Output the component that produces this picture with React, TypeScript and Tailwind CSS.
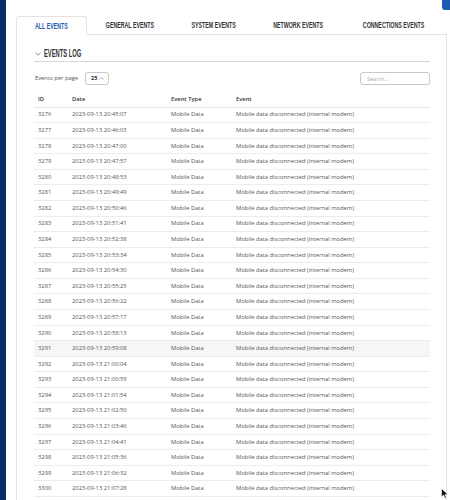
import { useState } from 'react'

const tabs = [
    { label: 'ALL EVENTS', w: 'w-[71px]' },
    { label: 'GENERAL EVENTS', w: 'w-[86px]' },
    { label: 'SYSTEM EVENTS', w: 'w-[81px]' },
    { label: 'NETWORK EVENTS', w: 'w-[88px]' },
    { label: 'CONNECTIONS EVENTS', w: 'w-[104px]' },
]

const times = [
    '20:45:07', '20:46:03', '20:47:00', '20:47:57', '20:48:53', '20:49:49', '20:50:46',
    '20:51:41', '20:52:38', '20:53:34', '20:54:30', '20:55:25', '20:56:22', '20:57:17',
    '20:58:13', '20:59:08', '21:00:04', '21:00:59', '21:01:54', '21:02:50', '21:03:46',
    '21:04:41', '21:05:36', '21:06:32', '21:07:28',
]

const rows = times.map((t, i) => ({
    id: 3276 + i,
    date: `2023-09-13 ${t}`,
    type: 'Mobile Data',
    event: 'Mobile data disconnected (internal modem)',
}))

const App = () => {
    const [active, setActive] = useState(0)

    return (
        <div className="relative flex min-h-[500px] bg-white font-['Open_Sans',sans-serif] overflow-hidden">
            <div className="w-[6px] flex-shrink-0 bg-[#0b2c62]" />
            <div className="absolute right-0 top-0 w-[8px] h-[10px] rounded-bl-[3px] bg-[#1c5bb1]" />

            <div className="flex-1 pl-[10px] pr-[3px] pt-[16px] flex flex-col">
                {/* tabs */}
                <div className="flex h-[18px]">
                    {tabs.map((tab, i) => (
                        <button
                            key={tab.label}
                            onClick={() => setActive(i)}
                            className={`${tab.w} flex-shrink-0 flex items-center justify-center pt-[1px] ${
                                i === active
                                    ? 'bg-white border border-b-0 border-[#e3e3e3] rounded-t-[3px] -mb-px relative z-10 text-[#1c5bb1]'
                                    : 'text-[#333]'
                            }`}
                        >
                            <span className="inline-block whitespace-nowrap scale-x-[0.62] font-['Liberation_Sans',sans-serif] font-bold text-[8.5px] leading-none">
                                {tab.label}
                            </span>
                        </button>
                    ))}
                </div>

                {/* panel */}
                <div className="flex-1 border border-[#e3e3e3] border-b-0 pl-[17px] pr-[16px] pt-[12px]">
                    <div className="flex items-center h-[15px] border-b border-[#d6d6d6]">
                        <svg width="6" height="4" viewBox="0 0 6 4" className="ml-[1px] mr-[3px]">
                            <path d="M0.5 0.8 L3 3.2 L5.5 0.8" fill="none" stroke="#666" strokeWidth="0.8" />
                        </svg>
                        <span className="inline-block origin-left scale-x-[0.58] whitespace-nowrap font-['Liberation_Sans',sans-serif] font-bold text-[10px] leading-none text-[#333]">
                            EVENTS LOG
                        </span>
                    </div>

                    <div className="flex items-center justify-between mt-[10px] h-[13px]">
                        <div className="flex items-center">
                            <span className="text-[5.8px] text-[#555] ml-[1px]">Events per page</span>
                            <div className="ml-[7px] h-[13px] w-[24px] border border-[#c8c8c8] rounded-[3px] flex items-center pl-[5px] gap-[2px]">
                                <span className="text-[5.5px] font-bold text-[#333]">25</span>
                                <svg width="5" height="3" viewBox="0 0 5 3">
                                    <path d="M0.4 2.6 L2.5 0.5 L4.6 2.6" fill="none" stroke="#777" strokeWidth="0.6" />
                                </svg>
                            </div>
                        </div>
                        <input
                            placeholder="Search..."
                            className="h-[13px] w-[70px] border border-[#c8c8c8] rounded-[3px] px-[6px] text-[5.5px] text-[#555] placeholder:text-[#aaa] outline-none"
                        />
                    </div>

                    <table className="w-full mt-[8px] border-collapse text-[5.8px]">
                        <thead>
                            <tr className="h-[14px] border-b border-[#e6e6e6] text-left text-[#333]">
                                <th className="w-[34px] pl-[4px] font-semibold">ID</th>
                                <th className="w-[99px] pl-[4px] font-semibold">Date</th>
                                <th className="w-[65px] pl-[4px] font-semibold">Event Type</th>
                                <th className="pl-[4px] font-semibold">Event</th>
                            </tr>
                        </thead>
                        <tbody>
                            {rows.map((r) => (
                                <tr
                                    key={r.id}
                                    className={`h-[15.58px] border-b border-[#ececec] text-[#555] ${
                                        r.id === 3291 ? 'bg-[#f6f6f6]' : ''
                                    }`}
                                >
                                    <td className="pl-[4px]">{r.id}</td>
                                    <td className="pl-[4px] whitespace-nowrap">{r.date}</td>
                                    <td className="pl-[4px]">{r.type}</td>
                                    <td className="pl-[4px] whitespace-nowrap">{r.event}</td>
                                </tr>
                            ))}
                        </tbody>
                    </table>
                </div>
            </div>

            <svg width="8" height="11" viewBox="0 0 8 11" className="absolute left-[441px] top-[488px]">
                <path d="M0.5 0.5 L0.5 9 L2.6 7 L4 10.3 L5.3 9.7 L4 6.6 L7 6.6 Z" fill="#111" stroke="#fff" strokeWidth="0.6" />
            </svg>
        </div>
    )
}

export default App
